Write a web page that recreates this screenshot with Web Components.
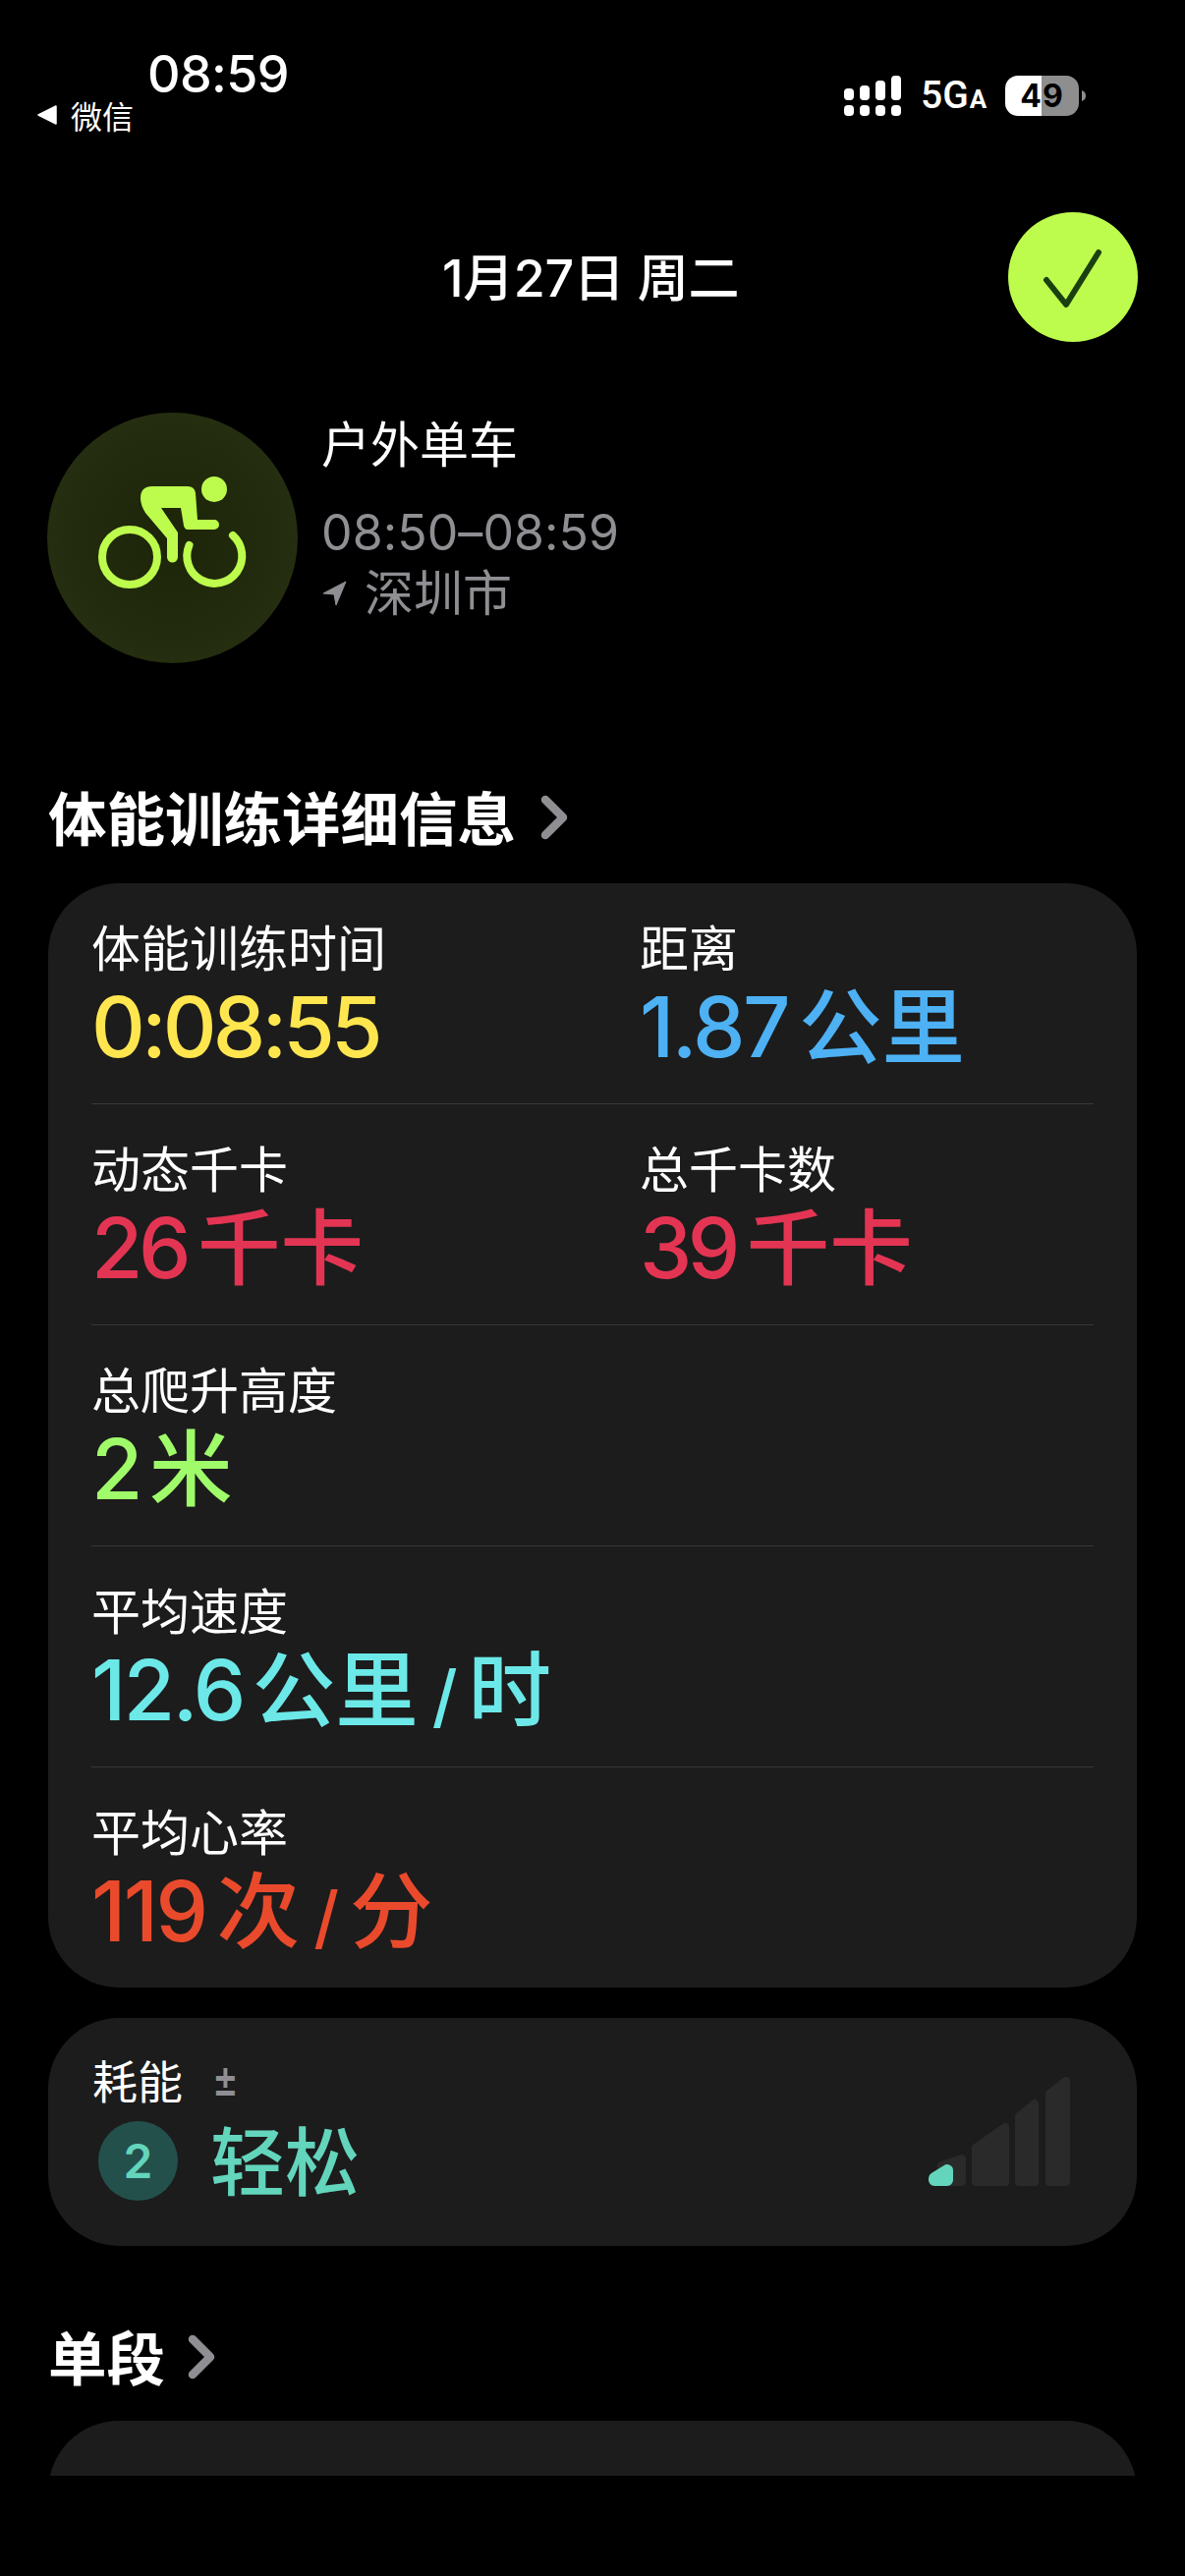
<!doctype html>
<html lang="zh-CN"><head><meta charset="utf-8"><title>体能训练</title>
<style>
html,body{margin:0;background:#000}
body{width:1206px;height:2622px;overflow:hidden;color:#fff;font-family:Inter,"Noto Sans CJK SC",sans-serif}
</style></head><body>
<fitness-app>
  <status-bar slot="status"></status-bar>
  <date-bar date="1月27日 周二"></date-bar>
  <workout-header title="户外单车" time="08:50–08:59" place="深圳市"></workout-header>
  <section-title style="--top:125px" text="体能训练详细信息"></section-title>
  <metric-card style="--top:39px">
    <metric-row>
      <metric-item label="体能训练时间" value="0:08:55" color="#ffe64f" style="--track:-3.9px"></metric-item>
      <metric-item label="距离" value="1.87" unit="公里" color="#4db1f4"></metric-item>
    </metric-row>
    <metric-row>
      <metric-item label="动态千卡" value="26" unit="千卡" color="#e33553" style="--track:-4.5px"></metric-item>
      <metric-item label="总千卡数" value="39" unit="千卡" color="#e33553" style="--track:-4.5px"></metric-item>
    </metric-row>
    <metric-row><metric-item label="总爬升高度" value="2" unit="米" color="#a0fb6a" style="--um:9px"></metric-item></metric-row>
    <metric-row><metric-item label="平均速度" value="12.6" unit="公里" per="时" color="#6de8e8" style="--um:9px"></metric-item></metric-row>
    <metric-row last><metric-item label="平均心率" value="119" unit="次" per="分" color="#ea4a2c"></metric-item></metric-row>
  </metric-card>
  <effort-card></effort-card>
  <section-title style="--top:81px;--gap:22px" text="单段"></section-title>
  <clipped-card></clipped-card>
</fitness-app>
<script>
function def(name, html, init){
  customElements.define(name, class extends HTMLElement{
    connectedCallback(){
      if(this.shadowRoot) return;
      const r=this.attachShadow({mode:'open'});
      r.innerHTML=html;
      if(init) init(this,r);
    }
  });
}
const attr=(el,r,map)=>{for(const k in map){const n=r.querySelector(map[k]);if(n)n.textContent=el.getAttribute(k)||''}};

def('fitness-app',`<style>:host{display:flex;flex-direction:column;padding:0 49px;box-sizing:border-box;width:1206px}</style><slot name="status"></slot><slot></slot>`);

def('status-bar',`<style>
:host{display:flex;justify-content:space-between;height:216px;margin:0 -49px;box-sizing:border-box;padding:48px 101px 0 38px}
.l{display:flex;flex-direction:column}
.t{font:500 52px/56px Inter,sans-serif;margin-left:112px;letter-spacing:-.6px}
.b{display:flex;align-items:center;gap:14px;height:40px;margin-top:-7px;font:400 32px/40px "Noto Sans CJK SC",sans-serif}
.r{display:flex;align-items:flex-start;padding-top:29px}
svg{display:block}
.net{font:500 39px/41px Roboto,sans-serif;margin-left:20px;width:68px;display:flex;align-items:baseline;white-space:nowrap}
.net small{font:700 26px/41px Roboto,sans-serif;margin-left:1px}
.bat{position:relative;margin-left:18px;width:75px;height:41px;border-radius:13px;overflow:hidden;background:linear-gradient(90deg,#fff 0 37px,#8e8e8e 37px);color:#000;text-align:center;font:700 32px/41px Inter,sans-serif;letter-spacing:1px}
.nub{margin:15px 0 0 3px}
</style>
<div class="l"><div class="t">08:59</div><div class="b"><svg width="20" height="20" viewBox="0 0 20 20"><path d="M19 1V19L1 10Z" fill="#fff" stroke="#fff" stroke-width="1.5" stroke-linejoin="round"/></svg><span>微信</span></div></div>
<div class="r">
<svg width="58" height="41" viewBox="0 0 58 41" fill="#fff"><rect x="0" y="13" width="10" height="12" rx="4"/><rect x="16" y="10" width="10" height="15" rx="4"/><rect x="32" y="5" width="10" height="20" rx="4"/><rect x="48" y="0" width="10" height="25" rx="4"/><rect x="0" y="30" width="10" height="11" rx="4"/><rect x="16" y="30" width="10" height="11" rx="4"/><rect x="32" y="30" width="10" height="11" rx="4"/><rect x="48" y="30" width="10" height="11" rx="4"/></svg>
<div class="net">5G<small>A</small></div>
<div class="bat">49</div>
<svg class="nub" width="4" height="11" viewBox="0 0 4 11"><path d="M0 0C3 1 4 3 4 5.500 4 8 3 10 0 11Z" fill="#8e8e8e"/></svg>
</div>`);

def('date-bar',`<style>
:host{display:block;position:relative;height:132px}
.d{display:block;text-align:center;padding:3px 4px 0 0;height:129px;font:500 52px/129px Inter,"Noto Sans CJK SC",sans-serif;letter-spacing:-.4px}
.c{position:absolute;right:-1px;top:0;width:132px;height:132px;border-radius:50%;background:#bdfc4d;display:flex}
svg{margin:auto}
</style><span class="d"></span><div class="c"><svg width="132" height="132" viewBox="0 0 132 132"><path d="M39 69 59 94 92 41" fill="none" stroke="#1a4010" stroke-width="6" stroke-linecap="round" stroke-linejoin="round"/></svg></div>`,
(e,r)=>attr(e,r,{date:'.d'}));

def('workout-header',`<style>
:host{display:flex;gap:24px;margin:72px 0 0 -1px;height:255px}
.i{width:255px;height:255px;border-radius:50%;background:radial-gradient(circle,#1d2509 0,#232c0e 60%,#2b3415 100%);flex:none}
.i svg{display:block}
.x{display:flex;flex-direction:column;font:400 50px/60px Inter,"Noto Sans CJK SC",sans-serif;color:#8e8e93}
.n{color:#fff;margin-top:3px}
.tm{margin-top:29px;font-size:50px;letter-spacing:.1px}
.p{display:flex;align-items:center;gap:18px;margin-top:2px}
</style>
<div class="i"><svg width="255" height="255" viewBox="48 420 255 255">
<circle cx="218" cy="498" r="13" fill="#bdfc4d"/>
<path d="M155 495H191Q198 495 199 502L201 529H218A5 5 0 0 1 218 539H191Q188 539 187 535L184 517H164L181 542V567A5.500 5.500 0 0 1 170 567V548L148 522Q143 514 143 507Q143 495 155 495Z" fill="#bdfc4d"/>
<g fill="none" stroke="#bdfc4d" stroke-width="8" stroke-linecap="round"><circle cx="132" cy="567" r="28"/><path d="M192.500 555A28 28 0 1 0 237 545"/></g>
</svg></div>
<div class="x"><div class="n"></div><div class="tm"></div><div class="p"><svg width="26" height="26" viewBox="0 0 26 26"><path d="M25 1 2 13 13 14 15 25Z" fill="#8e8e93" stroke="#8e8e93" stroke-width="1" stroke-linejoin="round"/></svg><span class="pl"></span></div></div>`,
(e,r)=>attr(e,r,{title:'.n',time:'.tm',place:'.pl'}));

def('section-title',`<style>
:host{display:flex;align-items:center;gap:var(--gap,24px);height:60px;margin:var(--top,0) 0 0 0;font:700 59.500px/60px "Noto Sans CJK SC",sans-serif}
svg{display:block;position:relative;top:2px}
</style><span></span><svg width="30" height="46" viewBox="0 0 30 46"><path d="M6 5 24 23 6 41" fill="none" stroke="#8e8e93" stroke-width="8.500" stroke-linecap="round" stroke-linejoin="round"/></svg>`,
(e,r)=>attr(e,r,{text:'span'}));

def('metric-card',`<style>
:host{display:block;margin-top:var(--top,0);background:#1c1c1c;border-radius:72px;padding:0 44px 0 44px}
</style><slot></slot>`);

def('metric-row',`<style>
:host{display:grid;grid-template-columns:558px 1fr;height:225px;box-sizing:border-box;border-bottom:1.5px solid #38383a}
:host([last]){border-bottom:0;height:224px}
</style><slot></slot>`);

def('metric-item',`<style>
:host{display:block;padding-top:33px}
.l{font:400 50px/60px "Noto Sans CJK SC",sans-serif;color:#fff}
.v{display:flex;align-items:baseline;height:90px;margin-top:9px;font:500 85px/90px Inter,"Noto Sans CJK SC",sans-serif;white-space:nowrap;letter-spacing:var(--track,-2.5px)}
.u{font:500 84.500px/70px "Noto Sans CJK SC",sans-serif;letter-spacing:0;margin-left:var(--um,11px)}
.s{font:500 70px/70px Inter,sans-serif;margin:0 11px 0 14px;letter-spacing:0}
.p{font:500 84.500px/70px "Noto Sans CJK SC",sans-serif;letter-spacing:0}
</style><div class="l"></div><div class="v"><span class="n"></span><span class="u"></span><span class="s"></span><span class="p"></span></div>`,
(e,r)=>{
  attr(e,r,{label:'.l',value:'.n',unit:'.u',per:'.p'});
  r.querySelector('.v').style.color=e.getAttribute('color');
  if(!e.getAttribute('unit')) r.querySelector('.u').remove();
  if(e.getAttribute('per')) r.querySelector('.s').textContent='/'; else {r.querySelector('.s').remove();r.querySelector('.p').remove();}
});

def('effort-card',`<style>
:host{display:block;position:relative;margin-top:31px;height:232px;background:#1c1c1c;border-radius:72px;box-sizing:border-box;padding:35px 45px 0}
.h{display:flex;align-items:center;gap:30px;font:400 46px/54px "Noto Sans CJK SC",sans-serif}
.pm{font:500 40px/54px Inter,sans-serif;color:#8e8e93;display:inline-block;transform:scaleY(1.35)}
.m{display:flex;align-items:center;gap:33px;margin:11px 0 0 6px;height:90px;color:#63d5bc;font:500 76px/90px "Noto Sans CJK SC",sans-serif}
.t{padding-bottom:6px}
.c{width:81px;height:81px;border-radius:50%;background:#24504b;text-align:center;font:600 48px/81px Inter,sans-serif}
svg{position:absolute;left:0;top:0;pointer-events:none}
</style>
<div class="h"><span>耗能</span><span class="pm">±</span></div>
<div class="m"><span class="c">2</span><span class="t">轻松</span></div>
<svg width="1108" height="232" viewBox="49 2054 1108 232"><g stroke-linejoin="round" stroke-width="8">
<path d="M958 2204 979 2197V2221H958Z" fill="#2a2a2a" stroke="#2a2a2a"/>
<path d="M993 2186 1023 2165V2221H993Z" fill="#2a2a2a" stroke="#2a2a2a"/>
<path d="M1037 2154 1053 2141V2221H1037Z" fill="#2a2a2a" stroke="#2a2a2a"/>
<path d="M1068 2131 1085 2118V2221H1068Z" fill="#2a2a2a" stroke="#2a2a2a"/>
<path d="M951 2217 964 2209V2219H951Z" fill="#63d5bc" stroke="#63d5bc" stroke-width="12"/>
</g></svg>`);

def('clipped-card',`<style>
:host{display:block;margin-top:37px;height:56px;overflow:hidden}
div{height:200px;background:#1c1c1c;border-radius:72px}
</style><div></div>`);
</script>
</body></html>
